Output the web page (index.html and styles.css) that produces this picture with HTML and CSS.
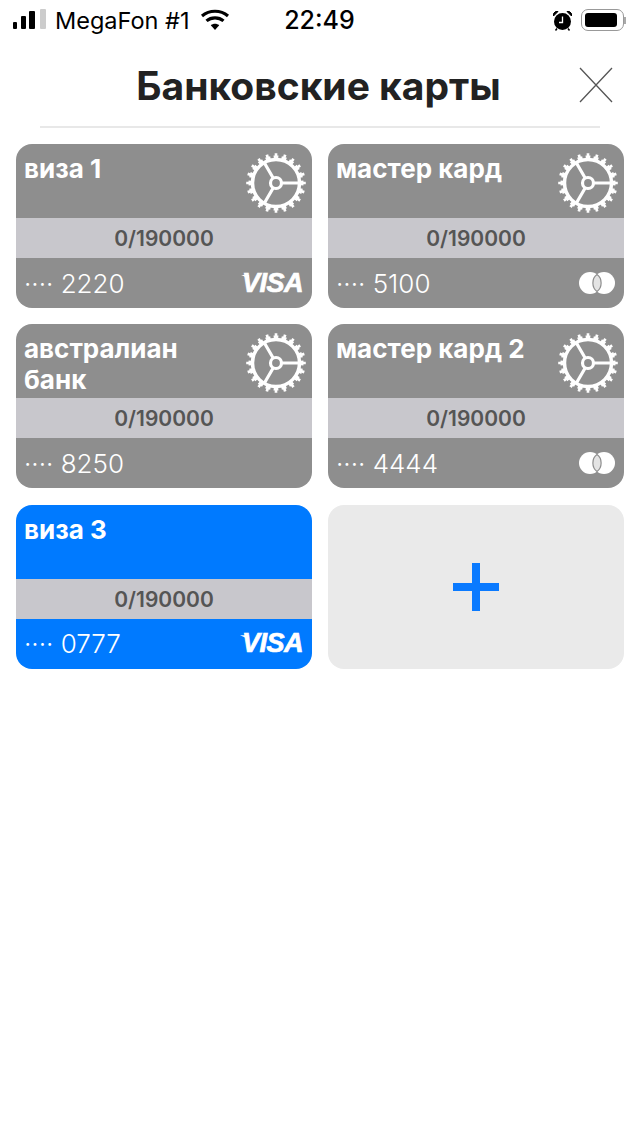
FILE: index.html
```html
<!DOCTYPE html>
<html lang="ru">
<head>
    <meta charset="UTF-8">
    <meta name="viewport" content="width=device-width, initial-scale=1.0">
    <title>Банковские карты</title>
    <link rel="stylesheet" href="styles.css">
</head>
<body>
    <svg class="defs" width="0" height="0">
        <symbol id="gear" viewBox="0 0 60 60">
            <circle cx="30" cy="30" r="26" fill="none" stroke="#fff" stroke-width="3" pathLength="200" stroke-dasharray="6 4" stroke-dashoffset="3"/>
            <circle cx="30" cy="30" r="28.300" fill="none" stroke="#fff" stroke-width="3" pathLength="200" stroke-dasharray="3 7" stroke-dashoffset="1.500"/>
            <circle cx="30" cy="30" r="23.500" fill="none" stroke="#fff" stroke-width="3.500"/>
            <circle cx="30" cy="30" r="5.500" fill="none" stroke="#fff" stroke-width="3.200"/>
            <path d="M36 30H54M27 35.200L18 50.800M27 24.800L18 9.200" fill="none" stroke="#fff" stroke-width="3.200"/>
        </symbol>
        <symbol id="master" viewBox="0 0 36 22">
            <circle cx="11" cy="11" r="11" fill="#fff"/>
            <circle cx="25" cy="11" r="11" fill="#fff"/>
            <path d="M18 2.600C12.500 6.500 12.500 15.500 18 19.400C23.500 15.500 23.500 6.500 18 2.600Z" fill="#e4e4e4" stroke="#8e8e8e" stroke-width="1.200"/>
        </symbol>
    </svg>

    <div class="status-bar">
        <div class="status-left">
            <div class="signal">
                <span class="bar bar-1"></span>
                <span class="bar bar-2"></span>
                <span class="bar bar-3"></span>
                <span class="bar bar-4"></span>
            </div>
            <span class="carrier">MegaFon #1</span>
            <svg class="wifi" width="30" height="22" viewBox="0 0 30 22">
                <path d="M15 21L10.800 16.300C13.200 14.300 16.800 14.300 19.200 16.300Z" fill="#000"/>
                <path d="M6.500 11.900C11.300 7.800 18.700 7.800 23.500 11.900" fill="none" stroke="#000" stroke-width="3.200"/>
                <path d="M2 6.900C9.500 .7 20.500 .7 28 6.900" fill="none" stroke="#000" stroke-width="3.200"/>
            </svg>
        </div>
        <div class="time">22:49</div>
        <div class="status-right">
            <svg class="alarm" width="19" height="21" viewBox="0 0 19 21">
                <circle cx="9.500" cy="11.500" r="8.500" fill="#000"/>
                <path d="M9.500 6.500V12.500H6" fill="none" stroke="#fff" stroke-width="1.300"/>
                <path d="M.5 6L5 1.500H2.500L.5 3.500ZM18.500 6L14 1.500H16.500L18.500 3.500Z" fill="#000" stroke="#000"/>
                <path d="M4 18.500L2.500 20.500M15 18.500L16.500 20.500" stroke="#000" stroke-width="1.500"/>
            </svg>
            <div class="battery">
                <div class="battery-body"><div class="battery-level"></div></div>
                <div class="battery-cap"></div>
            </div>
        </div>
    </div>

    <header class="page-header">
        <h1>Банковские карты</h1>
        <svg class="close" width="34" height="36" viewBox="0 0 34 36">
            <path d="M1 1L33 35M33 1L1 35" fill="none" stroke="#555" stroke-width="1.300"/>
        </svg>
    </header>

    <main class="cards">
        <div class="card">
            <div class="card-top">
                <div class="card-name">виза 1</div>
                <svg class="gear"><use href="#gear"/></svg>
            </div>
            <div class="card-limit">0/190000</div>
            <div class="card-bottom">
                <span class="card-number">···· 2220</span>
                <span class="visa">VISA</span>
            </div>
        </div>

        <div class="card">
            <div class="card-top">
                <div class="card-name">мастер кард</div>
                <svg class="gear"><use href="#gear"/></svg>
            </div>
            <div class="card-limit">0/190000</div>
            <div class="card-bottom">
                <span class="card-number">···· 5100</span>
                <svg class="master"><use href="#master"/></svg>
            </div>
        </div>

        <div class="card">
            <div class="card-top">
                <div class="card-name">австралиан банк</div>
                <svg class="gear"><use href="#gear"/></svg>
            </div>
            <div class="card-limit">0/190000</div>
            <div class="card-bottom">
                <span class="card-number">···· 8250</span>
            </div>
        </div>

        <div class="card">
            <div class="card-top">
                <div class="card-name">мастер кард 2</div>
                <svg class="gear"><use href="#gear"/></svg>
            </div>
            <div class="card-limit">0/190000</div>
            <div class="card-bottom">
                <span class="card-number">···· 4444</span>
                <svg class="master"><use href="#master"/></svg>
            </div>
        </div>

        <div class="card card-active">
            <div class="card-top">
                <div class="card-name">виза 3</div>
            </div>
            <div class="card-limit">0/190000</div>
            <div class="card-bottom">
                <span class="card-number">···· 0777</span>
                <span class="visa">VISA</span>
            </div>
        </div>

        <div class="card-add">
            <svg width="46" height="48" viewBox="0 0 46 48">
                <path d="M23 0V48M0 24H46" fill="none" stroke="#0a7aff" stroke-width="8"/>
            </svg>
        </div>
    </main>
</body>
</html>
```

FILE: styles.css
```css
* {
    box-sizing: border-box;
}
body {
    margin: 0;
    background-color: #fff;
    font-family: Inter, "Noto Sans", sans-serif;
    color: #000;
}
.defs {
    position: absolute;
}
.status-bar {
    display: grid;
    grid-template-columns: 1fr auto 1fr;
    align-items: center;
    height: 40px;
    padding: 0 14px 0 13px;
}
.status-left, .status-right {
    display: flex;
    align-items: center;
}
.status-right {
    justify-content: flex-end;
}
.signal {
    display: flex;
    align-items: flex-end;
    gap: 3px;
    height: 20px;
    margin-top: -2px;
}
.bar {
    width: 5px;
    border-radius: 1px;
    background-color: #000;
}
.bar-1 { height: 7px; width: 4px; }
.bar-2 { height: 13px; margin-left: 1px; }
.bar-3 { height: 18px; width: 6px; }
.bar-4 { height: 20px; width: 6px; margin-left: 2px; background-color: #ccc; }
.carrier {
    margin-left: 9px;
    font-size: 23.500px;
}
.wifi {
    margin-left: 10px;
}
.time {
    font-size: 25px;
    font-weight: 500;
}
.alarm {
    margin-right: 9px;
}
.battery {
    display: flex;
    align-items: center;
}
.battery-body {
    width: 43px;
    height: 22px;
    padding: 3px;
    border: 1.500px solid #999;
    border-radius: 7px;
}
.battery-level {
    width: 32px;
    height: 100%;
    border-radius: 3px;
    background-color: #000;
}
.battery-cap {
    width: 2px;
    height: 7px;
    background-color: #aaa;
}
.page-header {
    position: relative;
    height: 88px;
    margin: 0 40px;
    border-bottom: 2px solid #e8e8e8;
}
.page-header h1 {
    margin: 0;
    padding: 23px 3px 0 0;
    text-align: center;
    font-size: 39px;
    line-height: 46px;
    font-weight: 700;
    color: #222;
}
.close {
    position: absolute;
    top: 27px;
    right: -13px;
}
.cards {
    display: grid;
    grid-template-columns: 296px 296px;
    grid-auto-rows: 164px;
    gap: 16.400px 16px;
    padding: 16px 16px 0;
}
.card {
    display: flex;
    flex-direction: column;
    border-radius: 16px;
    overflow: hidden;
    background-color: #8e8e8e;
    color: #fff;
}
.card-active {
    background-color: #007aff;
}
.card-top {
    display: flex;
    justify-content: space-between;
    height: 74px;
    padding: 9px 6px 0 8px;
}
.card-name {
    max-width: 200px;
    font-size: 26px;
    line-height: 31px;
    font-weight: 700;
}
.gear {
    width: 60px;
    height: 60px;
}
.card-limit {
    height: 40px;
    background-color: #c8c7cc;
    text-align: center;
    font-size: 21px;
    line-height: 41px;
    font-weight: 600;
    color: #555;
}
.card-bottom {
    display: flex;
    justify-content: space-between;
    align-items: center;
    flex: 1;
    padding: 0 9px 0 8px;
}
.card-number {
    font-size: 26px;
    font-weight: 300;
}
.visa {
    position: relative;
    font-family: "Liberation Sans", sans-serif;
    font-size: 27px;
    font-weight: 700;
    font-style: italic;
    letter-spacing: -.5px;
    -webkit-text-stroke: .7px #fff;
}
.visa::before {
    content: "";
    position: absolute;
    top: 7px;
    left: -2px;
    width: 9px;
    height: 4px;
    background-color: #fff;
    clip-path: polygon(0 0, 100% 0, 100% 100%);
}
.master {
    width: 36px;
    height: 22px;
}
.card-add {
    display: flex;
    justify-content: center;
    align-items: center;
    border-radius: 16px;
    background-color: #eaeaea;
}
```
